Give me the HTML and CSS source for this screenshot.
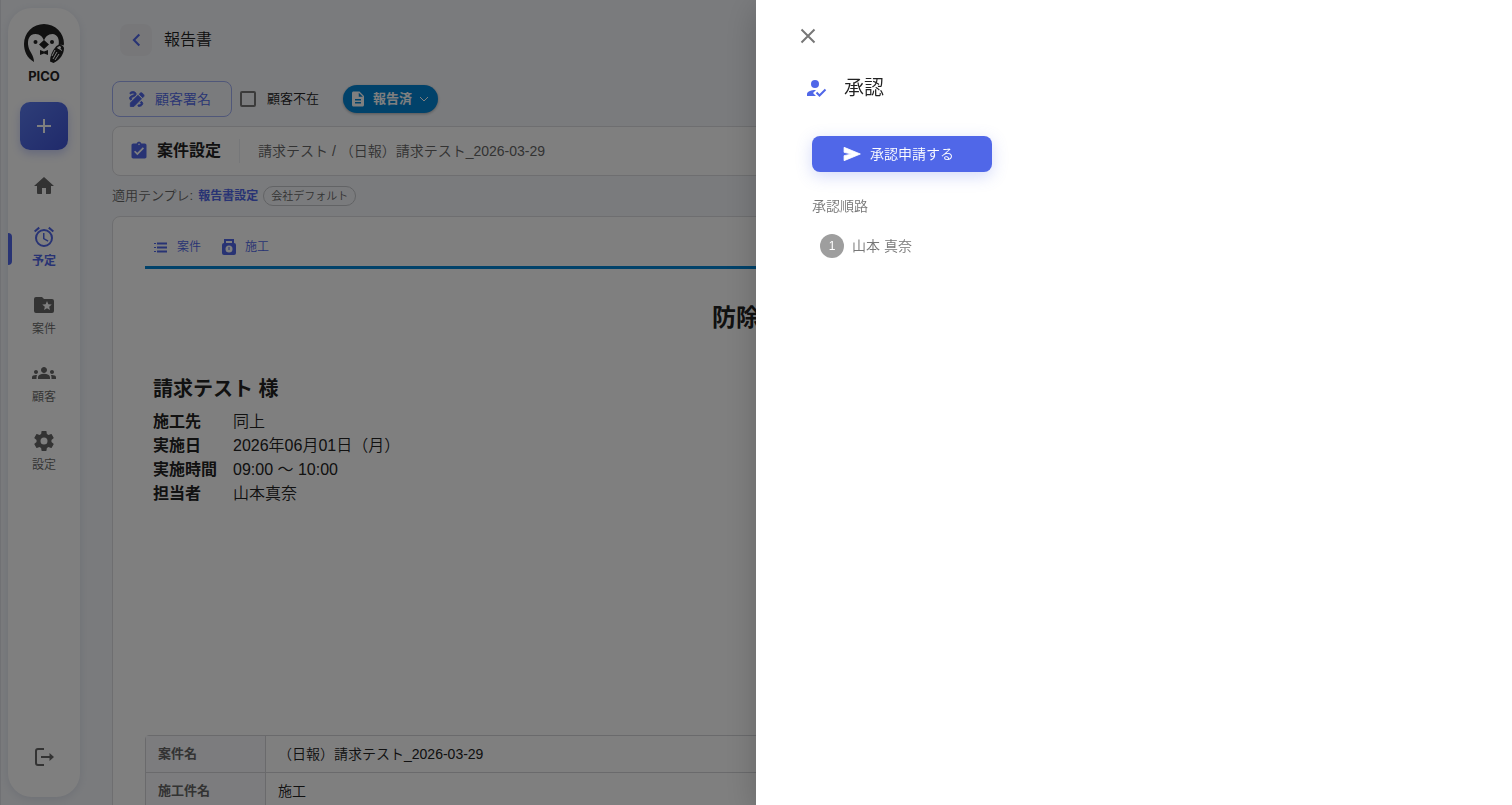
FILE: index.html
```html
<!DOCTYPE html>
<html lang="ja">
<head>
	<meta charset="utf-8">
	<meta name="viewport" content="width=device-width, initial-scale=1">
	<title>報告書</title>
	<link rel="stylesheet" href="styles.css">
</head>
<body>
	<div class="app">
		<aside class="sidebar">
			<a class="logo" href="#">
				<svg class="logo-mark" viewBox="0 0 40 40">
					<path fill="#222" d="M10 38C3 34 0 27 0 20A20 20 0 0 1 40 20L39.500 21.500C38 20.500 36 20.500 34.500 21.500C36 15 33 10 28.500 10C24 10 21 13 20 17C19 13 16 10 11.500 10C5 10 3 16 4.500 23C5.500 28 10 31 10 38Z"/>
					<circle cx="11.500" cy="18" r="2" fill="#222"/>
					<circle cx="28" cy="18" r="2" fill="#222"/>
					<path fill="#222" d="M20 16L25 20.500L20 25L15 20.500ZM16 26L20 27.500L24 26V31L20 29.500L16 31Z"/>
					<path fill="#222" d="M32 22.500C35 19 39.500 21 40 24C40 30 36 36 29.500 39L26 37.500C26 32 28 27 32 22.500Z"/>
					<path fill="none" stroke="#fff" d="M33 23.500L38 26.500M29 35L33 28M31 36L35 30M28 32L31 26"/>
					<circle cx="35.500" cy="23.500" r="1.500" fill="#fff"/>
				</svg>
				<span>PICO</span>
			</a>
			<button class="add" aria-label="追加">
				<svg viewBox="0 0 24 24"><path fill="currentColor" d="M19 13h-6v6h-2v-6H5v-2h6V5h2v6h6z"/></svg>
			</button>
			<nav class="nav">
				<a class="nav-item home" href="#" aria-label="ホーム">
					<svg viewBox="0 0 24 24"><path fill="currentColor" d="M10 20v-6h4v6h4q1 0 1-1v-7h3L12 3 2 12h3v7q0 1 1 1z"/></svg>
				</a>
				<a class="nav-item active" href="#">
					<svg viewBox="0 0 24 24"><path fill="currentColor" d="M12,20A7,7 0 0,1 5,13A7,7 0 0,1 12,6A7,7 0 0,1 19,13A7,7 0 0,1 12,20M12,4A9,9 0 0,0 3,13A9,9 0 0,0 12,22A9,9 0 0,0 21,13A9,9 0 0,0 12,4M12.5,8H11V14L15.75,16.85L16.5,15.62L12.5,13.25V8M7.88,3.39L6.6,1.86L2,5.71L3.29,7.24L7.88,3.39M22,5.72L17.4,1.86L16.11,3.39L20.71,7.25L22,5.72Z"/></svg>
					<span>予定</span>
				</a>
				<a class="nav-item" href="#">
					<svg viewBox="0 0 24 24"><path fill="currentColor" d="M20,6H12L10,4H4A2,2 0 0,0 2,6V18A2,2 0 0,0 4,20H20A2,2 0 0,0 22,18V8A2,2 0 0,0 20,6M17.94,17L15,15.28L12.06,17L12.84,13.67L10.25,11.43L13.66,11.14L15,8L16.34,11.14L19.75,11.43L17.16,13.67L17.94,17Z"/></svg>
					<span>案件</span>
				</a>
				<a class="nav-item" href="#">
					<svg viewBox="0 0 24 24"><path fill="currentColor" d="M12 12.750c1.630 0 3.070.390 4.240.900 1.080.480 1.760 1.560 1.760 2.730V18H6v-1.610c0-1.180.680-2.260 1.760-2.730 1.170-.520 2.610-.910 4.240-.910zM4 13c1.100 0 2-.900 2-2s-.900-2-2-2-2 .900-2 2 .900 2 2 2zm1.130 1.100c-.370-.060-.740-.100-1.130-.100-.990 0-1.930.210-2.780.580C.480 14.900 0 15.620 0 16.430V18h4.500v-1.610c0-.830.230-1.610.630-2.290zM20 13c1.100 0 2-.900 2-2s-.900-2-2-2-2 .900-2 2 .900 2 2 2zm4 3.430c0-.810-.480-1.530-1.220-1.850-.850-.370-1.790-.580-2.780-.580-.390 0-.760.040-1.130.100.400.680.630 1.460.630 2.290V18H24v-1.570zM12 6c1.660 0 3 1.340 3 3s-1.340 3-3 3-3-1.340-3-3 1.340-3 3-3z"/></svg>
					<span>顧客</span>
				</a>
				<a class="nav-item" href="#">
					<svg viewBox="0 0 24 24"><path fill="currentColor" d="M12,15.5A3.5,3.5 0 0,1 8.5,12A3.5,3.5 0 0,1 12,8.5A3.5,3.5 0 0,1 15.5,12A3.5,3.5 0 0,1 12,15.5M19.43,12.97C19.47,12.65 19.5,12.33 19.5,12C19.5,11.67 19.47,11.34 19.43,11L21.54,9.37C21.73,9.22 21.78,8.95 21.66,8.73L19.66,5.27C19.54,5.05 19.27,4.96 19.05,5.05L16.56,6.05C16.04,5.66 15.5,5.32 14.87,5.07L14.5,2.42C14.46,2.18 14.25,2 14,2H10C9.75,2 9.54,2.18 9.5,2.42L9.13,5.07C8.5,5.32 7.96,5.66 7.44,6.05L4.95,5.05C4.73,4.96 4.46,5.05 4.34,5.27L2.34,8.73C2.21,8.95 2.27,9.22 2.46,9.37L4.57,11C4.53,11.34 4.5,11.67 4.5,12C4.5,12.33 4.53,12.65 4.57,12.97L2.46,14.63C2.27,14.78 2.21,15.05 2.34,15.27L4.34,18.73C4.46,18.95 4.73,19.03 4.95,18.95L7.44,17.94C7.96,18.34 8.5,18.68 9.13,18.93L9.5,21.58C9.54,21.82 9.75,22 10,22H14C14.25,22 14.46,21.82 14.5,21.58L14.87,18.93C15.5,18.67 16.04,18.34 16.56,17.94L19.05,18.95C19.27,19.03 19.54,18.95 19.66,18.73L21.66,15.27C21.78,15.05 21.73,14.78 21.54,14.63L19.43,12.97Z"/></svg>
					<span>設定</span>
				</a>
			</nav>
			<button class="logout" aria-label="ログアウト">
				<svg viewBox="0 0 24 24"><path fill="none" stroke="currentColor" stroke-width="2" d="M12 4H6Q4 4 4 6v12q0 2 2 2h6M9 12h10"/><path fill="currentColor" d="M17.500 8l4.500 4-4.500 4z"/></svg>
			</button>
		</aside>

		<main class="main">
			<header class="header">
				<button class="back" aria-label="戻る">
					<svg viewBox="0 0 24 24"><path fill="none" stroke="currentColor" stroke-width="2.500" d="M16 5.500l-6.500 6.500 6.500 6.500"/></svg>
				</button>
				<h1>報告書</h1>
			</header>

			<div class="toolbar">
				<button class="sign">
					<svg viewBox="0 0 24 24"><path fill="currentColor" stroke="currentColor" stroke-width="1" d="M18.850 10.390l1.060-1.060c.780-.780.780-2.050 0-2.830L18.500 5.090c-.780-.780-2.050-.780-2.830 0l-1.060 1.060 4.240 4.240zm-5.660-2.830L4 16.760V21h4.240l9.190-9.190-4.240-4.250zM19 17.500c0 2.190-2.540 3.500-5 3.500-.550 0-1-.450-1-1s.450-1 1-1c1.540 0 3-.730 3-1.500 0-.470-.480-.870-1.230-1.200l1.480-1.480c1.070.630 1.750 1.470 1.750 2.680zM4.580 13.350C3.610 12.790 3 12.060 3 11c0-1.800 1.890-2.630 3.560-3.360C7.590 7.180 9 6.560 9 6c0-.410-.780-1-2-1-1.260 0-1.800.610-1.830.640-.350.410-.980.460-1.400.120-.410-.340-.490-.950-.150-1.380C3.730 4.240 4.760 3 7 3s4 1.320 4 3c0 1.870-1.930 2.720-3.640 3.470C6.420 9.880 5 10.500 5 11c0 .310.430.600 1.070.860l-1.490 1.490z"/></svg>
					顧客署名
				</button>
				<label class="absent"><input type="checkbox">顧客不在</label>
				<button class="status">
					<svg viewBox="0 0 24 24"><path fill="currentColor" d="M14 2H6c-1.100 0-2 .900-2 2v16c0 1.100.900 2 2 2h12c1.100 0 2-.900 2-2V8l-6-6zm2 16H8v-2h8v2zm0-4H8v-2h8v2zm-3-5V3.500L18.500 9H13z"/></svg>
					報告済
					<svg class="caret" viewBox="0 0 12 12"><path fill="none" stroke="currentColor" d="M2 4l4 4 4-4"/></svg>
				</button>
			</div>

			<section class="project">
				<svg viewBox="0 0 24 24"><path fill="currentColor" d="M19 3h-4.180C14.400 1.840 13.300 1 12 1c-1.300 0-2.400.840-2.820 2H5c-1.100 0-2 .900-2 2v14c0 1.100.900 2 2 2h14c1.100 0 2-.900 2-2V5c0-1.100-.900-2-2-2zm-7 0c.550 0 1 .450 1 1s-.450 1-1 1-1-.450-1-1 .450-1 1-1zm-2 14l-4-4 1.410-1.410L10 14.170l6.590-6.590L18 9l-8 8z"/></svg>
				<h2>案件設定</h2>
				<p>請求テスト / （日報）請求テスト_2026-03-29</p>
			</section>

			<div class="template">
				<span>適用テンプレ:</span>
				<a href="#">報告書設定</a>
				<span class="tag">会社デフォルト</span>
			</div>

			<article class="report">
				<nav class="tabs">
					<a href="#">
						<svg viewBox="0 0 16 16"><path fill="none" stroke="currentColor" d="M1 4.500h2M1 8.500h2M1 12.500h2"/><path fill="none" stroke="currentColor" stroke-width="2" d="M4 4.500h10M4 8.500h10M4 12.500h10"/></svg>
						案件
					</a>
					<a href="#">
						<svg viewBox="0 0 16 16"><path fill="none" stroke="currentColor" stroke-width="2" d="M4 5V1h8v4"/><rect x="1" y="4" width="14" height="12" rx="2" fill="currentColor"/><circle cx="8" cy="10" r="3.500" fill="#fff"/><path fill="none" stroke="currentColor" d="M8 8v3"/></svg>
						施工
					</a>
				</nav>
				<h2 class="report-title">防除作業報告書</h2>
				<h3>請求テスト 様</h3>
				<dl class="facts">
					<dt>施工先</dt><dd>同上</dd>
					<dt>実施日</dt><dd>2026年06月01日（月）</dd>
					<dt>実施時間</dt><dd>09:00 〜 10:00</dd>
					<dt>担当者</dt><dd>山本真奈</dd>
				</dl>
				<table class="details">
					<tr><th>案件名</th><td>（日報）請求テスト_2026-03-29</td></tr>
					<tr><th>施工件名</th><td>施工</td></tr>
				</table>
			</article>
		</main>
	</div>

	<div class="backdrop"></div>
	<div class="drawer" role="dialog" aria-labelledby="drawer-title">
		<button class="close" aria-label="閉じる">
			<svg viewBox="0 0 24 24"><path fill="none" stroke="currentColor" stroke-width="2" d="M5.500 5.500l13 13M18.500 5.500l-13 13"/></svg>
		</button>
		<div class="drawer-head">
			<svg viewBox="0 0 24 24"><path fill="currentColor" d="M9 17l3-2.940c-.390-.040-.680-.060-1-.060-2.670 0-8 1.340-8 4v2h9l-3-3z"/><circle cx="11" cy="8" r="4" fill="currentColor"/><path fill="none" stroke="currentColor" stroke-width="2" d="M12.500 16.500l3 3 6-6"/></svg>
			<h2 id="drawer-title">承認</h2>
		</div>
		<div class="drawer-body">
			<button class="request">
				<svg viewBox="0 0 24 24"><path fill="currentColor" stroke="currentColor" stroke-linejoin="round" d="M2.500 20v-6l9-2-9-2V4l19.500 8z"/></svg>
				承認申請する
			</button>
			<h3>承認順路</h3>
			<ol class="route">
				<li><span class="step">1</span>山本 真奈</li>
			</ol>
		</div>
	</div>
</body>
</html>
```

FILE: styles.css
```css
*{
	box-sizing:border-box;
	}
body{
	margin:0;
	background:#f5f7fb;
	color:#222;
	font-family:"Liberation Sans", "Noto Sans CJK JP", sans-serif;
	font-size:14px;
	font-weight:350;
	line-height:24px;
	}
h1, h2, h3, p, dl, dd, ol{
	margin:0;
	padding:0;
	}
a{
	color:inherit;
	text-decoration:none;
	}
button{
	display:flex;
	align-items:center;
	justify-content:center;
	padding:0;
	border:0;
	background:none;
	color:inherit;
	font:inherit;
	}
svg{
	display:block;
	flex:none;
	}
.app{
	display:flex;
	height:100vh;
	overflow:hidden;
	border-left:1px solid #e0e3e8;
	}

/* sidebar */
.sidebar{
	display:flex;
	flex-direction:column;
	align-items:center;
	flex:none;
	width:72px;
	margin:8px 8px 8px 7px;
	padding:16px 0 28px;
	border-radius:24px;
	background:#fff;
	box-shadow:0 2px 10px rgba(80,100,140,0.15);
	color:#666;
	}
.logo{
	display:flex;
	flex-direction:column;
	align-items:center;
	color:#222;
	font-family:Inter, sans-serif;
	font-size:13px;
	font-weight:700;
	}
.logo-mark{
	width:40px;
	height:40px;
	}
.add{
	width:48px;
	height:48px;
	margin-top:14px;
	border-radius:10px;
	background:linear-gradient(135deg, #5c7cf0, #4054d6);
	box-shadow:0 4px 10px rgba(80,103,232,0.3);
	color:#fff;
	}
.add svg{
	width:24px;
	}
.nav{
	display:flex;
	flex-direction:column;
	gap:22px;
	width:100%;
	margin-top:24px;
	}
.nav-item{
	position:relative;
	display:flex;
	flex-direction:column;
	align-items:center;
	gap:2px;
	font-size:12px;
	line-height:20px;
	}
.nav-item svg{
	width:24px;
	height:24px;
	}
.home{
	padding-bottom:5px;
	}
.active{
	color:#5067e8;
	font-weight:700;
	}
.active::before{
	content:"";
	position:absolute;
	top:8px;
	left:0;
	width:4px;
	height:32px;
	border-radius:0 4px 4px 0;
	background:#5067e8;
	}
.logout{
	margin-top:auto;
	}
.logout svg{
	width:24px;
	}

/* page */
.main{
	flex:1;
	min-width:0;
	padding:24px 32px 0 24px;
	}
.header{
	display:flex;
	align-items:center;
	gap:12px;
	padding-left:8px;
	}
.header h1{
	font-size:16px;
	font-weight:350;
	}
.back{
	width:32px;
	height:32px;
	border-radius:8px;
	background:#eeeff3;
	color:#5067e8;
	}
.back svg{
	width:20px;
	}
.toolbar{
	display:flex;
	align-items:center;
	margin-top:25px;
	}
.sign{
	justify-content:flex-start;
	gap:8px;
	width:120px;
	height:36px;
	padding-left:14px;
	border:1px solid #a0aef2;
	border-radius:8px;
	color:#5067e8;
	}
.sign svg{
	width:20px;
	}
.absent{
	display:flex;
	align-items:center;
	gap:11px;
	margin:0 24px 0 8px;
	font-size:13px;
	}
.absent input{
	appearance:none;
	width:16px;
	height:16px;
	margin:0;
	border:2px solid #777;
	border-radius:2px;
	}
.status{
	gap:6px;
	height:28px;
	padding:0 8px 0 6px;
	border-radius:14px;
	background:#0284d4;
	box-shadow:0 1px 3px rgba(0,0,0,0.3);
	color:#fff;
	font-size:13px;
	font-weight:700;
	}
.status svg{
	width:18px;
	}
.status .caret{
	width:12px;
	}
.project{
	display:flex;
	align-items:center;
	height:50px;
	margin-top:9px;
	padding:0 16px;
	border:1px solid #dcdde0;
	border-radius:8px;
	background:#fff;
	}
.project svg{
	width:20px;
	color:#5067e8;
	}
.project h2{
	margin-left:8px;
	padding-right:18px;
	border-right:1px solid #eceef2;
	font-size:16px;
	}
.project p{
	margin-left:18px;
	color:#666;
	}
.template{
	display:flex;
	align-items:center;
	gap:5px;
	height:20px;
	margin-top:10px;
	color:#666;
	font-size:13px;
	}
.template a{
	color:#5067e8;
	font-size:12px;
	font-weight:700;
	}
.tag{
	padding:0 7px;
	border:1px solid #c4c6ca;
	border-radius:10px;
	font-size:11px;
	line-height:18px;
	}
.report{
	margin-top:10px;
	padding:18px 32px;
	border:1px solid #dcdde0;
	border-radius:8px;
	background:#fff;
	}
.tabs{
	display:flex;
	gap:20px;
	padding:0 8px 7px;
	border-bottom:3px solid #0284d4;
	color:#5067e8;
	font-size:12px;
	}
.tabs a{
	display:flex;
	align-items:center;
	gap:8px;
	}
.tabs svg{
	width:16px;
	}
.report-title{
	margin-top:33px;
	font-size:24px;
	line-height:32px;
	text-align:center;
	}
.report h3{
	margin:42px 8px 8px;
	font-size:20px;
	line-height:26px;
	}
.facts{
	display:grid;
	grid-template-columns:72px 1fr;
	column-gap:8px;
	padding-left:8px;
	font-size:16px;
	}
.facts dt{
	font-weight:700;
	}
.details{
	width:100%;
	margin-top:229px;
	border:1px solid #d4d5d9;
	border-radius:4px 4px 0 0;
	border-spacing:0;
	}
.details th, .details td{
	height:37px;
	padding:0 12px;
	border-bottom:1px solid #d4d5d9;
	text-align:left;
	}
.details th{
	width:120px;
	border-right:1px solid #d4d5d9;
	background:#f8f9fc;
	color:#666;
	font-size:13px;
	}

/* approval drawer */
.backdrop{
	position:fixed;
	inset:0;
	background:rgba(0,0,0,0.5);
	}
.drawer{
	position:fixed;
	top:0;
	right:0;
	bottom:0;
	width:50%;
	padding:24px 40px;
	background:#fff;
	box-shadow:0 8px 32px rgba(0,0,0,0.2);
	}
.close{
	width:24px;
	height:24px;
	color:#777;
	}
.close svg{
	width:24px;
	}
.drawer-head{
	display:flex;
	align-items:center;
	gap:16px;
	margin-top:28px;
	padding-left:8px;
	}
.drawer-head svg{
	width:24px;
	color:#5067e8;
	}
.drawer-head h2{
	font-size:20px;
	font-weight:350;
	}
.drawer-body{
	padding:36px 16px;
	color:#777;
	}
.request{
	justify-content:flex-start;
	gap:8px;
	width:180px;
	height:36px;
	padding-left:30px;
	border-radius:8px;
	background:#5067e8;
	box-shadow:0 4px 16px rgba(80,103,232,0.25);
	color:#fff;
	}
.request svg{
	width:20px;
	}
.drawer-body h3{
	margin-top:22px;
	font-size:14px;
	font-weight:350;
	}
.route{
	margin-top:16px;
	padding-left:8px;
	list-style:none;
	}
.route li{
	display:flex;
	align-items:center;
	gap:8px;
	}
.step{
	width:24px;
	border-radius:12px;
	background:#9e9e9e;
	color:#fff;
	font-size:12px;
	text-align:center;
	}
```
